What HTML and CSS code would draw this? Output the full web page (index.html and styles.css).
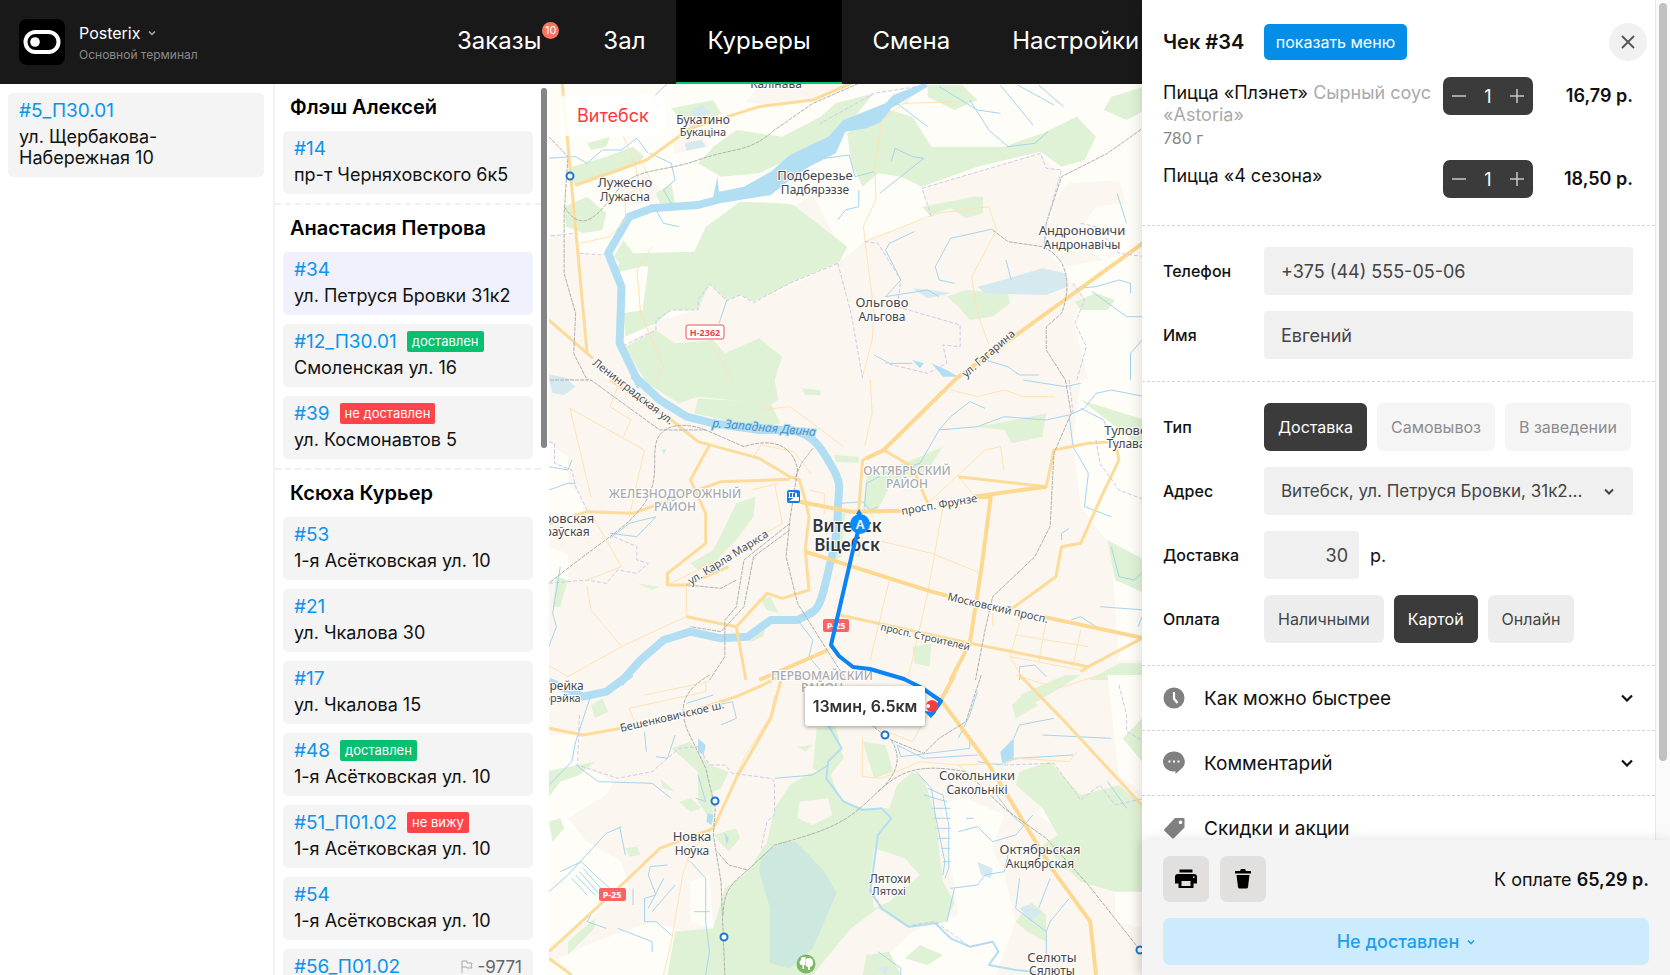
FILE: index.html
```html
<!DOCTYPE html>
<html lang="ru">
<head>
<meta charset="utf-8">
<title>Posterix — Курьеры</title>
<link rel="stylesheet" href="styles.css">
</head>
<body>
<div class="workspace">
  <header class="topbar">
    <button class="brand" type="button">
      <svg class="brand-logo" viewBox="0 0 46 46" aria-hidden="true"><rect width="46" height="46" rx="8" fill="#000"/><rect x="6.500" y="13" width="33" height="20" rx="10" fill="none" stroke="#fff" stroke-width="4"/><circle cx="16" cy="23" r="4.800" fill="#fff"/></svg>
      <span class="brand-text">
        <span class="brand-name">Posterix <svg class="chev-brand" viewBox="0 0 8 6" aria-hidden="true"><path d="M1 1.500l3 3 3-3"/></svg></span>
        <span class="brand-sub">Основной терминал</span>
      </span>
    </button>
    <nav class="tabs">
      <a class="tab" href="#orders">Заказы<span class="count">10</span></a>
      <a class="tab" href="#hall">Зал</a>
      <a class="tab tab-active" href="#couriers">Курьеры</a>
      <a class="tab" href="#shift">Смена</a>
      <a class="tab" href="#settings">Настройки</a>
    </nav>
  </header>
  <div class="board">
    <section class="unassigned">
      <article class="card"><div class="card-head"><a class="order" href="#5">#5_П30.01</a></div><p class="address">ул. Щербакова-Набережная 10</p></article>
    </section>
    <section class="couriers">
      <div class="courier-list">
        <div class="courier">
          <h2 class="courier-name">Флэш Алексей</h2>
          <article class="card"><div class="card-head"><a class="order" href="#14">#14</a></div><p class="address">пр-т Черняховского 6к5</p></article>
        </div>
        <div class="courier">
          <h2 class="courier-name">Анастасия Петрова</h2>
          <article class="card card-selected"><div class="card-head"><a class="order" href="#34">#34</a></div><p class="address">ул. Петруся Бровки 31к2</p></article>
          <article class="card"><div class="card-head"><a class="order" href="#12">#12_П30.01</a><span class="badge badge-ok">доставлен</span></div><p class="address">Смоленская ул. 16</p></article>
          <article class="card"><div class="card-head"><a class="order" href="#39">#39</a><span class="badge badge-bad">не доставлен</span></div><p class="address">ул. Космонавтов 5</p></article>
        </div>
        <div class="courier">
          <h2 class="courier-name">Ксюха Курьер</h2>
          <article class="card"><div class="card-head"><a class="order" href="#53">#53</a></div><p class="address">1-я Асётковская ул. 10</p></article>
          <article class="card"><div class="card-head"><a class="order" href="#21">#21</a></div><p class="address">ул. Чкалова 30</p></article>
          <article class="card"><div class="card-head"><a class="order" href="#17">#17</a></div><p class="address">ул. Чкалова 15</p></article>
          <article class="card"><div class="card-head"><a class="order" href="#48">#48</a><span class="badge badge-ok">доставлен</span></div><p class="address">1-я Асётковская ул. 10</p></article>
          <article class="card"><div class="card-head"><a class="order" href="#51">#51_П01.02</a><span class="badge badge-bad">не вижу</span></div><p class="address">1-я Асётковская ул. 10</p></article>
          <article class="card"><div class="card-head"><a class="order" href="#54">#54</a></div><p class="address">1-я Асётковская ул. 10</p></article>
          <article class="card"><div class="card-head"><a class="order" href="#56">#56_П01.02</a><span class="late"><svg class="flag" viewBox="0 0 12 13" aria-hidden="true"><path d="M1 13V1h5v2h5l-1 3 1 2H6V7H1"/></svg>-9771</span></div></article>
        </div>
      </div>
      <div class="list-scroll"></div>
    </section>
    <section class="map" aria-label="Карта">
      <svg class="map-canvas" viewBox="549 84 593 891" preserveAspectRatio="xMinYMin slice">
        <rect class="land" x="545" y="80" width="640" height="900"/>
        <!-- north -->
        <g transform="translate(545 80) scale(.38265 .33333)">
          <path class="field" d="M0 0H1568V900H1420L1380 720L1410 650L1370 600L1310 500L1320 400L1350 290L1295 220L985 325L1010 410L835 485L765 550L600 640L545 670L430 615L400 690L300 720L210 800L195 640L160 530L90 520L80 470L0 460Z"/>
          <path class="land" d="M525 65L560 15H790L700 60L600 80ZM180 330L260 290L330 350L210 380ZM330 170L400 150L430 200L340 220ZM650 380L700 340L760 480ZM1370 310L1500 300L1520 370L1440 380L1380 480L1460 540L1360 560L1310 500L1330 360Z"/>
          <path class="wood" d="M510 365L620 370L650 375L790 500L770 545L640 610L600 635L545 665L510 645L475 660L430 612L400 690L330 690L290 730L210 770L205 700L255 690L270 560L200 555L180 530L205 480L230 520L390 515L420 440Z"/>
          <path class="wood" d="M330 85L440 60L460 100L420 130L380 140L350 110ZM440 200L500 150L620 170L720 110L760 70L860 40L780 150L650 230L560 280L460 290L400 250ZM850 110L900 90L960 110L1010 200L1200 200L1300 160L1390 110L1440 170L1410 240L1350 260L1295 215L1130 260L985 320L930 290L870 280L830 320L800 250L790 160ZM1000 15H1090L1130 60L1070 90L1000 50ZM1480 50L1568 20V90L1520 120L1460 90Z"/>
          <path class="wood" d="M70 260L160 230L230 200L260 230L230 260L80 320L60 280ZM50 380L110 350L160 400L150 450L100 460L55 440ZM985 380L1120 350H1145V400L1100 415L1060 385L1005 405ZM1050 650L1100 630L1210 640L1215 670L1170 710L1110 720L1080 680ZM1385 665L1440 640L1490 660L1470 690L1400 690ZM210 800L290 750L340 790L440 780L470 820L560 775L620 830L600 900H260ZM110 190L170 170L160 200L120 210ZM180 580L220 500L250 560ZM290 340L330 310L340 370H300Z"/>
          <path class="lake" d="M1130 620L1180 605L1300 565L1360 580L1365 620L1310 645L1150 640ZM380 95L410 75L435 100L390 115ZM365 190L410 180L420 200L370 212ZM960 625L1010 630L1060 640L1000 655ZM0 880L80 900H0Z"/>
          <path class="river" d="M450 360L400 375L280 385L220 410L165 520L200 620L195 790L250 920"/>
          <path class="river-fill" d="M990 10L910 45L890 70L780 120L740 170L640 225L590 275L520 320L455 335L450 290L440 350L430 375L590 345L640 300L690 260L760 220L785 155L840 145L880 125L905 85L1000 20ZM960 840L990 850L980 865ZM1010 850L1050 870L1080 890H1040Z"/>
          <path class="stream" d="M0 235L80 230L110 250L150 210L200 210L240 175L270 220M200 10L320 10L280 55L300 90M275 220L330 250L340 300L310 330L330 370M730 235L795 225L810 290L860 275M820 330V380L785 390L765 420M905 245L915 205L960 230L990 235L875 340M1030 20L1130 90L1190 100M1110 60L1160 150L1210 200L1280 190L1315 155M1190 15L1275 135M1235 15L1330 75M1290 15L1355 80M920 70L1000 140M1170 447L1060 475L1020 560L1030 600L1070 610M965 455L900 490L890 510L930 600L890 650L1000 630L1030 650M1205 540L1218 600M1390 625L1440 620L1500 600L1530 610V640M1430 635L1520 710H1568M1495 340L1520 430M860 825L900 850L960 850M1150 840L1210 860L1240 885H1290M475 660L455 730M290 390L310 430L350 440M1568 770L1530 820V900"/>
          <path class="road-thin" d="M205 170L235 250L250 340M240 220L275 295L210 350V420L170 470L90 490M950 60L880 120L862 260L865 360L832 440L860 700L855 780L830 890M835 485L1025 400L1160 380L1180 450L1115 590L1130 700L1160 795M940 70L1080 65M430 780L490 900M280 500L240 570L250 700L310 860L290 900"/>
          <path class="road" d="M45 10L110 820M80 315L265 240L380 145L560 80L700 60L800 10M10 720L125 835"/>
          <path class="road-big" d="M1568 485L1075 895"/>
          <path class="rail" d="M10 170L60 230L50 400L50 580L80 700L75 820L110 900M50 380C100 470 140 400 190 330S300 280 400 240S530 220 600 150L700 70L820 10M1568 140L1470 220L1350 290L1310 430L1305 500M1170 450L1210 485L1300 500C1380 540 1370 640 1350 700L1310 740V810L1360 900"/>
          <path class="border" d="M0 470L80 460M90 520L155 525M765 550L640 610L545 668L510 645L475 662L430 612L400 660L400 690L330 690L290 720V750L200 800M765 550L800 700L830 895M835 485L870 490L930 600L920 680L1085 735V800L1040 795L1050 850L1000 880L890 850M1010 410L985 325L1295 220L1310 265L1350 270L1310 430L1305 500M1400 430L1440 440L1500 520L1568 530M1380 610L1410 660L1385 730L1415 800L1390 900M1000 15L860 40L720 130"/>
        </g>
        <!-- centre -->
        <g transform="translate(545 380) scale(.38265 .33333)">
          <path class="field" d="M0 180L60 230V310L100 360V400H0ZM1400 0H1568V840H1500L1480 500L1400 380L1380 180Z"/>
          <path class="field" d="M0 500L60 520V600H0Z"/>
          <path class="wood" d="M230 0H600L610 60L580 80L530 65L400 50L350 70L280 20ZM400 55L590 70L615 130L560 145L390 100ZM500 370L550 350L545 410L500 480L430 560L400 570L380 550L440 510L470 440ZM755 225L820 230V250L760 245ZM765 400H785L775 530L750 545ZM560 655L590 650L610 700L580 690ZM960 800L1010 790L1005 860L965 850ZM1120 140L1180 130L1310 100L1300 170L1220 190L1200 150ZM840 290L960 240L1040 200L1000 270L900 320L870 390L830 400ZM1470 480L1568 540V640L1490 600ZM30 590L60 600L40 680H20ZM240 610L300 620L280 630ZM530 790L580 730L570 770ZM670 25L720 30V45L680 45ZM1400 60L1568 120V210L1480 130ZM1420 900L1500 850H1568V900Z"/>
          <path class="lake" d="M10 0L60 0L80 20L50 45L20 40ZM305 210L318 205L310 225Z"/>
          <path class="river" d="M230 -15L300 60L370 110L440 130L560 150L640 150C700 160 720 200 750 260S765 330 765 400S755 500 735 600S710 690 660 720H590L530 770L460 775L380 755L310 780L250 840L195 910"/>
          <path class="stream" d="M10 260L60 270L70 240M10 330L60 310H80M170 475L220 430L290 410L240 470L170 460M40 560L20 700L30 740L10 800M660 720L700 780L690 830L740 900M775 370L830 365L850 390L870 380M835 380L840 310L890 280L980 250L1030 150L1060 110L1110 65L1150 85M1030 150L1130 140L1200 110L1310 120L1370 105L1410 85L1440 40L1480 30L1568 50M1250 0L1360 20L1400 10M1370 110L1380 200L1420 280L1410 380L1480 410M1480 500L1500 590L1540 600L1568 570M1400 85L1460 120L1470 150M1350 480V460L1370 445M1450 680L1568 690L1550 740M1375 720L1400 710L1440 740M1240 900V860L1280 855L1310 890"/>
          <path class="road-thin" d="M65 85L260 210L220 410M65 85L120 350M190 20L170 80L225 120L205 170M545 230L565 195L650 215L695 280M600 310L620 430L520 500L330 610M690 330L730 340V400M780 200L700 130L640 80L560 90M850 0L855 100L835 200M1060 30L1130 50L1200 30L1250 50H1330M1000 370L1150 210L1190 200L1200 270M1080 290L1120 345M865 480L1010 520L1140 580M1040 380L1000 640L950 890M900 600L850 840M610 310L540 330M370 620V710L330 730L200 800L60 890L0 850M110 620L120 690L200 800M120 400L200 560L110 600M1240 730L1215 830L1400 870M1310 720L1290 850M1400 750L1380 860M1230 765L1420 800M1215 830L1250 900M800 510L820 530L830 470M1170 700V740"/>
          <path class="road" d="M170 0L330 120L400 185L560 235L640 290L665 300L680 360L690 410L680 510L690 630L620 655L580 640L500 740L525 900M430 195L380 300L420 400V490L320 580V615H370L480 560M400 330L460 305L640 298M400 330L230 400L110 395L0 435M885 210L830 240L820 390M885 210L960 260L1000 370M1080 290L1310 320L1330 210L1420 190L1490 185L1500 240L1450 360L1400 490L1350 500L1335 590L1215 690M370 710L500 740M770 705L1110 790L1420 860L1568 770M1420 860L1400 875"/>
          <path class="road-big" d="M1080 -10L885 210L840 235M665 365L800 395L930 392M1125 352L1165 350L1140 570L1110 790L1060 900M680 515L1010 635L1060 650M1300 710L1568 775M740 810L620 870L560 900M1120 350L1310 320"/>
          <path class="rail" d="M0 0L120 0L300 150L420 150L520 200C600 170 650 200 660 270L640 420L630 530L660 670L770 870L790 900M420 150C350 120 300 140 290 190S300 300 260 370S150 480 10 610M640 430L520 540L500 680L470 720V830L430 900M640 450L545 530L520 680L460 755L380 740M500 600L460 625L370 615M700 205L670 250L655 290M1360 0L1375 100L1330 220L1320 440L1280 530L1170 650L1150 750L1125 900"/>
          <path class="border" d="M10 185L25 190V250L70 270L80 320L110 390M180 470L240 500V540L270 550L240 580L190 570L160 610L110 600L10 610M1370 0L1380 100M1440 180L1450 250L1500 330L1568 360"/>
        </g>
        <!-- south -->
        <g transform="translate(545 675) scale(.38265 .33333)">
          <path class="field" d="M0 180H90V270L180 320L160 360L60 430L110 500L200 560L220 640L130 720L0 820ZM0 870L130 800L280 740L340 760L320 900H0ZM380 620L430 600L440 760L380 740ZM700 480L730 560L700 580L660 470ZM840 430L880 420L870 480ZM1040 400L1080 360L1200 420L1170 520L1200 600L1230 740L1180 900H840L960 770L1080 720ZM1470 0H1568V360L1500 300ZM1490 650H1568V760L1490 740ZM1290 420L1310 360L1380 440L1350 470Z"/>
          <path class="wood" d="M640 330L680 300L740 280L770 370L830 400L900 400L920 330L960 290L990 310L1020 420L1040 620L1070 680L1050 740L950 760L870 700L800 760L700 900H320L340 770L440 760L470 640L530 590L580 500L600 400ZM1240 290L1320 260L1400 360L1500 330L1568 400V650L1490 650L1400 620L1300 510L1340 480L1300 400L1230 330ZM830 200L890 210L910 290L860 310ZM710 160L760 155L780 250L740 310L700 280ZM120 90L150 70L165 110L130 130ZM330 220L380 200L430 270L480 290L460 340L440 350V450L400 380V290ZM660 215L700 210L680 230ZM0 290L130 260L90 300L40 320L0 380ZM10 440L40 430L50 460L20 500ZM210 520L240 515L250 540L220 545ZM440 480L500 460L510 490L480 530ZM350 380L380 370L410 400L380 410ZM1220 90L1250 60L1290 90L1230 130ZM1240 60L1360 0H1400L1330 50L1270 90ZM1230 740L1270 680L1310 720V800L1260 770ZM840 840L900 830L930 900H830ZM980 810L1040 840L1000 870L940 850ZM130 760L60 840V800L130 730ZM1568 120L1510 190L1568 270ZM300 310L340 350L310 340Z"/>
          <path class="land" d="M665 380L740 370L750 420L700 450L660 430ZM860 520L940 550L980 600L900 680L860 700L850 620ZM1320 760L1420 700L1480 740L1490 900H1400Z"/>
          <path class="lake-deep" d="M565 540L620 500H655L690 540L730 590L762 655L700 820L640 880L588 865V700L560 590Z"/>
          <path class="river-fill" d="M1190 230L1225 190V250L1195 265ZM400 190L420 210L415 240L400 230ZM425 415L440 420L435 450L422 440ZM468 470L480 490L475 510Z"/>
          <path class="lake" d="M1130 560L1170 580L1165 610L1140 600ZM870 880L900 875L890 900ZM1240 700L1260 690L1300 710L1270 740Z"/>
          <path class="river" d="M225 -5L160 50L100 65L10 20"/>
          <path class="river-thin" d="M740 150L775 220L740 260L735 310L780 380L830 405L880 400L905 430L870 480L850 650L880 700L950 755L1020 745L1060 790L1110 815L1170 800L1185 830L1160 870L1230 885L1280 890"/>
          <path class="stream" d="M80 270L140 320L280 325L330 370M120 60L80 200L70 260L10 330M200 455L160 475L60 600L10 650M195 455L210 540M40 590L95 560L130 600L170 640M70 610L110 660M80 600L130 660M90 590L140 655M100 580L150 645M340 180L320 250L290 245M260 170L265 230M320 570L275 575L270 600L290 660L260 670V740L290 740L330 780M310 610L270 700M340 630L280 710M380 560L420 610V740L430 830L420 900M390 710H430M190 760L280 800V830M160 760L110 740L120 720M230 640V690M400 300L420 380L395 370M600 310L700 300L740 270M450 90L490 80L500 130L460 150M370 85L440 60M970 290L1010 340L1020 420L1045 560L1040 600M1000 340L1040 360L1055 450V580L1045 610M990 360L1050 380M1010 400H1060M1015 430H1060M1020 460H1060M1025 490H1060M1035 520H1060M1040 560H1060M1060 640L1130 630L1150 600L1200 590L1210 540M1050 740L1070 640M1080 470L1130 455L1170 500L1230 480L1275 420M1100 430L1120 430M1160 330L1220 420L1270 470M1110 180V220L930 245L920 210L990 250L1130 240M1130 260L1190 270L1230 250L1380 240M1225 190L1240 150L1330 130M1300 180L1480 190M1240 610L1230 700L1310 770L1320 740L1370 670M1320 610L1290 700M1310 770V860M1470 320L1520 400M870 830L930 880V900M1130 50L1110 120L1080 190"/>
          <path class="road-thin" d="M420 50L220 100L240 160M430 20L260 60M420 50V20M600 60L590 120L520 250L440 460L380 530L360 600L330 800L310 900M830 190V305L880 310L980 260L1080 270L1200 265L1240 250L1370 260L1390 230M850 150L960 200L1020 80M1230 0L1340 40L1450 0M1060 50L1010 70M1080 270L1100 290"/>
          <path class="road" d="M10 160L100 180L200 160L350 120L500 65L570 30L620 0M620 0L590 130L500 310L440 460L300 520L200 630L10 830M10 850L70 900"/>
          <path class="road" d="M1240 0L1350 130L1568 400"/>
          <path class="road-big" d="M1070 0L1035 75L1160 270L1330 590L1425 740L1440 900"/>
          <path class="rail" d="M430 0C340 60 360 120 370 160L420 280L445 400L440 480L460 620L470 900M1140 0L1100 140L1030 190L990 235L905 195L840 140M905 195C940 260 910 310 870 350C790 440 760 460 600 510L530 585L480 570L450 530M530 585C470 640 470 660 465 720M870 350C920 300 960 260 1100 290L1200 400L1310 490L1420 630L1555 825"/>
          <path class="border" d="M90 120L85 270L190 310L280 290L350 220L400 215L430 270L470 270L490 295L590 310L600 320V420L580 440L565 520M1500 30L1520 120V170L1568 200M1200 270L1330 265L1400 375L1450 330L1490 390L1568 370M850 640L880 700M960 750L1020 740L1110 815L1170 800"/>
        </g>
        <g class="place">
          <text class="t12" x="776" y="88">Калінава</text>
          <text class="t12" x="703" y="124">Букатино</text><text class="t11" x="703" y="136">Букаціна</text>
          <text class="t13" x="625" y="187">Лужесно</text><text class="t12" x="625" y="201">Лужасна</text>
          <text class="t13" x="815" y="180">Подберезье</text><text class="t12" x="815" y="194">Падбярэззе</text>
          <text class="t13" x="1082" y="235">Андроновичи</text><text class="t12" x="1082" y="249">Андронавічы</text>
          <text class="t13" x="882" y="307">Ольгово</text><text class="t12" x="882" y="321">Альгова</text>
          <text class="t13" x="569" y="523">ровская</text><text class="t12" x="567" y="536">раўская</text>
          <text class="t13" x="1126" y="435">Тулово</text><text class="t12" x="1126" y="448">Тулава</text>
          <text class="t12" x="563" y="690">орейка</text><text class="t11" x="562" y="702">брэйка</text>
          <text class="t13" x="977" y="780">Сокольники</text><text class="t12" x="977" y="794">Сакольнікі</text>
          <text class="t13" x="692" y="841">Новка</text><text class="t12" x="692" y="855">Ноўка</text>
          <text class="t13" x="1040" y="854">Октябрьская</text><text class="t12" x="1040" y="868">Акцябрская</text>
          <text class="t12" x="890" y="883">Лятохи</text><text class="t11" x="889" y="895">Лятохі</text>
          <text class="t13" x="1052" y="962">Селюты</text><text class="t12" x="1052" y="975">Сялюты</text>
          <text class="city" x="847" y="532">Витебск</text><text class="city" x="847" y="551">Віцебск</text>
        </g>
        <g class="district">
          <text x="675" y="498">ЖЕЛЕЗНОДОРОЖНЫЙ</text><text x="675" y="511">РАЙОН</text>
          <text x="907" y="475">ОКТЯБРЬСКИЙ</text><text x="907" y="488">РАЙОН</text>
          <text x="822" y="680">ПЕРВОМАЙСКИЙ</text><text x="822" y="692">РАЙОН</text>
        </g>
        <g class="street">
          <text transform="translate(592 364) rotate(38)">Ленинградская ул.</text>
          <text transform="translate(966 378) rotate(-41)">ул. Гагарина</text>
          <text transform="translate(902 515) rotate(-10)">просп. Фрунзе</text>
          <text transform="translate(691 585) rotate(-32)">ул. Карла Маркса</text>
          <text transform="translate(947 600) rotate(13)">Московский просп.</text>
          <text class="t10" transform="translate(880 630) rotate(13)">просп. Строителей</text>
          <text transform="translate(621 732) rotate(-13)">Бешенковичское ш.</text>
          <text class="water" transform="translate(712 427) rotate(5)">р. Западная Двина</text>
        </g>
        <rect x="686" y="325" width="38" height="14" rx="2" fill="#fff" stroke="#f0505a"/><text class="shield shield-red" x="705" y="336">Н-2362</text>
        <rect x="823" y="619" width="26" height="13" rx="2" fill="#fb6366"/><text class="shield" x="836" y="629">Р-25</text>
        <rect x="599" y="888" width="27" height="13" rx="2" fill="#fb6366"/><text class="shield" x="612" y="898">Р-25</text>
        <g class="station"><circle cx="570" cy="176" r="3.500"/><circle cx="885" cy="735" r="3.500"/><circle cx="715" cy="801" r="3.500"/><circle cx="724" cy="937" r="3.500"/><circle cx="1140" cy="950" r="3.500"/></g>
        <rect x="787" y="490" width="13" height="13" rx="2" fill="#1a78dc"/><path d="M788.500 492.500h6M789.500 492.500v5M792.500 492.500v5M788.500 497.500h6" stroke="#fff" fill="none"/><path d="M795 493h2v4h2v4h-10l6-4z" fill="#fff"/>
        <circle cx="806" cy="964" r="9.500" fill="#7cb865"/><path d="M803 957c-2 0-2.500 2-2 3-2 1-2 4 0 5h1.500v4h1.500v-4h1.500v-8zM809 958a3.500 4.500 0 0 1 1 9v3h-2v-3a3.500 4.500 0 0 1 1-9z" fill="#fff"/>
        <path class="route" d="M859 513L860 524L853 550C847 575 840 605 831 645L839 656L853 667L870 669L904 679L922 688L941 701L932 714"/>
        <path d="M859 509l3 5h-6zM924 711l7 7 5-6z" fill="#0b83f5"/>
        <circle cx="860" cy="524" r="10" fill="#0b8cfa"/><text class="pin" x="860" y="529">A</text>
        <circle cx="932" cy="706" r="6" fill="#fa3c41"/><circle cx="928" cy="706" r="2" fill="#fff"/>
        <g class="eta"><rect x="805" y="686" width="120" height="40" rx="3" fill="#fff"/><text x="865" y="712">13мин, 6.5км</text></g>
      </svg>
      <button class="city-chip" type="button">Витебск</button>
    </section>
  </div>
</div>

<aside class="receipt">
  <div class="receipt-body">
    <div class="receipt-scroll">
      <section class="block items">
        <div class="receipt-head">
          <h1 class="receipt-title">Чек #34</h1>
          <button class="menu-btn" type="button">показать меню</button>
          <button class="close" type="button" aria-label="Закрыть"><svg viewBox="0 0 14 14" aria-hidden="true"><path d="M1 1l12 12M13 1L1 13"/></svg></button>
        </div>
        <div class="item">
          <div class="item-name">Пицца «Плэнет» <span class="extra">Сырный соус «Astoria»</span><div class="weight">780 г</div></div>
          <div class="stepper"><button type="button" aria-label="Меньше"><svg viewBox="0 0 16 16"><path d="M1 8h14"/></svg></button><span>1</span><button type="button" aria-label="Больше"><svg viewBox="0 0 16 16"><path d="M1 8h14M8 1v14"/></svg></button></div>
          <div class="price">16,79 р.</div>
        </div>
        <div class="item">
          <div class="item-name">Пицца «4 сезона»</div>
          <div class="stepper"><button type="button" aria-label="Меньше"><svg viewBox="0 0 16 16"><path d="M1 8h14"/></svg></button><span>1</span><button type="button" aria-label="Больше"><svg viewBox="0 0 16 16"><path d="M1 8h14M8 1v14"/></svg></button></div>
          <div class="price">18,50 р.</div>
        </div>
      </section>
      <section class="block fields">
        <div class="field-row"><label class="label" for="phone">Телефон</label><input class="input" id="phone" type="tel" value="+375 (44) 555-05-06"></div>
        <div class="field-row"><label class="label" for="name">Имя</label><input class="input" id="name" type="text" value="Евгений"></div>
      </section>
      <section class="block fields">
        <div class="field-row"><span class="label">Тип</span><div class="options"><button class="opt opt-on" type="button">Доставка</button><button class="opt opt-dim" type="button">Самовывоз</button><button class="opt opt-dim" type="button">В заведении</button></div></div>
        <div class="field-row"><label class="label" for="addr">Адрес</label><div class="select-wrap"><select class="input input-select" id="addr"><option>Витебск, ул. Петруся Бровки, 31к2...</option></select><svg class="chev-select" viewBox="0 0 10 7" aria-hidden="true"><path d="M1 1.500l4 4 4-4"/></svg></div></div>
        <div class="field-row"><label class="label" for="fee">Доставка</label><input class="input input-fee" id="fee" type="text" value="30"><span class="unit">р.</span></div>
        <div class="field-row"><span class="label">Оплата</span><div class="options"><button class="opt" type="button">Наличными</button><button class="opt opt-on" type="button">Картой</button><button class="opt" type="button">Онлайн</button></div></div>
      </section>
      <button class="fold" type="button"><svg class="fold-icon" viewBox="0 0 22 22" aria-hidden="true"><circle cx="11" cy="11" r="10.500" fill="#808080"/><path d="M11 5v6.500l3.500 4.500" fill="none" stroke="#fff" stroke-width="2.200"/></svg><span>Как можно быстрее</span><svg class="fold-chev" viewBox="0 0 12 8" aria-hidden="true"><path d="M1 1.500l5 5 5-5"/></svg></button>
      <button class="fold" type="button"><svg class="fold-icon" viewBox="0 0 22 24" aria-hidden="true"><path d="M11 .500a10.500 10 0 0 1 6.500 18L12.500 23v-2.700A10.500 10 0 1 1 11 .500z" fill="#808080"/><path d="M5.500 9.500h2v2h-2zM10 9.500h2v2h-2zM14.500 9.500h2v2h-2z" fill="#fff"/></svg><span>Комментарий</span><svg class="fold-chev" viewBox="0 0 12 8" aria-hidden="true"><path d="M1 1.500l5 5 5-5"/></svg></button>
      <button class="fold" type="button"><svg class="fold-icon" viewBox="0 0 22 22" aria-hidden="true"><path fill-rule="evenodd" d="M12 1h8.500q1 0 1 1v8.500L11 21q-1 1-2 0L1.500 14q-1-1 0-2zM17.500 3.500a1.800 1.800 0 1 0 .01 0z" fill="#808080"/></svg><span>Скидки и акции</span></button>
    </div>
    <div class="receipt-track"><div class="receipt-thumb"></div></div>
  </div>
  <footer class="receipt-foot">
    <div class="foot-row">
      <button class="tool" type="button" aria-label="Печать"><svg viewBox="0 0 22 20" aria-hidden="true"><path d="M4.500.500h13v3h-13z"/><path fill-rule="evenodd" d="M3 5h16q3 0 3 3v6.500h-3.500V19h-15v-4.500H0V8q0-3 3-3zM6.500 12v5h9v-5zM18 7.500h1.500V9H18z"/></svg></button>
      <button class="tool" type="button" aria-label="Удалить"><svg viewBox="0 0 22 20" aria-hidden="true"><path d="M3 2h5l1-2h4l1 2h5v2.500H3zM4.500 6h13l-1.500 12q0 1.500-2 1.500H8q-2 0-2-1.500z"/></svg></button>
      <div class="total">К оплате <b>65,29 р.</b></div>
    </div>
    <button class="status-btn" type="button">Не доставлен <svg viewBox="0 0 8 6" aria-hidden="true"><path d="M1 1.500l3 3 3-3"/></svg></button>
  </footer>
</aside>
</body>
</html>
```
FILE: styles.css
```css
* { box-sizing: border-box; }
body {
  margin: 0;
  display: flex;
  height: 100vh;
  overflow: hidden;
  font-family: Inter, "Liberation Sans", sans-serif;
  font-size: 18px;
  color: #111;
  background: #fff;
}
button, input, select { font: inherit; color: inherit; border: 0; padding: 0; margin: 0; background: none; }
a { text-decoration: none; color: inherit; }
h1, h2, p { margin: 0; }
svg { display: block; }

.workspace { flex: 1; min-width: 0; display: flex; flex-direction: column; }
.topbar { display: flex; height: 84px; flex: none; background: #191919; overflow: hidden; color: #fff; }
.brand { flex: 0 0 426px; display: flex; align-items: center; gap: 14px; padding-left: 19px; text-align: left; }
.brand-logo { width: 46px; height: 46px; }
.brand-text { display: flex; flex-direction: column; gap: 2px; padding-top: 4px; }
.brand-name { display: flex; align-items: center; gap: 8px; font-size: 16px; line-height: 20px; }
.brand-sub { font-size: 12px; line-height: 20px; color: #8a8a8a; }
.chev-brand { width: 8px; height: 6px; fill: none; stroke: #aaa; stroke-width: 1.5; }
.tabs { display: flex; flex: none; }
.tab { position: relative; display: flex; align-items: center; padding: 0 31px 4px; font-size: 24px; }
.tab-active { background: #000; border-bottom: 2px solid #0ac46e; padding-bottom: 2px; }
.count { position: absolute; right: 13px; top: 22px; width: 17px; height: 17px; border-radius: 50%; background: #fa7460; font-size: 11px; line-height: 17px; text-align: center; }

.board { flex: 1; min-height: 0; display: flex; }
.unassigned { flex: 0 0 275px; padding: 9px 9px 9px 8px; border-right: 2px solid #f3f3f3; }
.couriers { flex: 0 0 274px; display: flex; overflow: hidden; }
.courier-list { flex: 1; }
.courier { padding-left: 8px; border-bottom: 2px dashed #efefef; }
.courier-name { padding-left: 7px; font-size: 20px; font-weight: 600; line-height: 47px; color: #000; }
.list-scroll { flex: none; width: 6px; height: 360px; margin: 4px 2px 0 0; border-radius: 3px; background: #858585; }
.card { min-height: 63px; margin-bottom: 9px; padding: 4px 11px 9px; border-radius: 5px; background: #f4f4f4; }
.courier .card { margin-right: 8px; }
.card-selected { background: #f1f1fd; }
.card-head { display: flex; align-items: center; gap: 10px; height: 27px; margin-bottom: 2px; }
.order { font-size: 19px; color: #0a95ec; }
.address { font-size: 18px; line-height: 21px; color: #111; }
.badge { padding: 0 5px; border-radius: 2px; color: #fff; font-size: 13px; line-height: 21px; }
.badge-ok { background: #08c070; }
.badge-bad { background: #ff4449; }
.late { margin-left: auto; display: flex; align-items: center; gap: 4px; font-size: 17px; color: #666; }
.flag { width: 12px; height: 13px; fill: none; stroke: #aaa; }

.map { position: relative; flex: 1; min-width: 0; overflow: hidden; background: #fbf7f0; }
.map-canvas { width: 100%; height: 100%; font-family: "Noto Sans", "Open Sans", sans-serif; }
.city-chip { position: absolute; left: 12px; top: 11px; padding: 0 16px; border-radius: 5px; background: rgba(255, 255, 255, .85); color: #ff383f; font-size: 18px; line-height: 41px; }
.land { fill: #fbf7f0; }
.field { fill: #fefdf7; }
.wood { fill: #e0f2d5; }
.lake { fill: #d5e9ef; }
.lake-deep { fill: #cce8df; }
.river-fill { fill: #b2def4; }
.river, .river-thin, .stream, .road, .road-big, .road-thin, .rail, .border { fill: none; vector-effect: non-scaling-stroke; stroke-linejoin: round; }
.river { stroke: #b2def4; stroke-width: 8px; }
.river-thin { stroke: #b2def4; stroke-width: 2px; }
.stream { stroke: #a4d5ef; stroke-width: 1px; }
.road { stroke: #fddc9b; stroke-width: 3px; }
.road-big { stroke: #fdd890; stroke-width: 4px; }
.road-thin { stroke: #fee3b4; stroke-width: 1px; }
.rail { stroke: #b0b0b0; stroke-width: 1px; stroke-dasharray: 4 1; }
.border { stroke: #cfc8ec; stroke-width: 1px; stroke-dasharray: 4 2; }
.place text { fill: #45464c; text-anchor: middle; stroke: #fff; stroke-width: 2px; paint-order: stroke; }
.place .city { font-size: 17px; font-weight: 600; fill: #33353a; }
.t13 { font-size: 13px; }
.t12 { font-size: 12px; }
.t11 { font-size: 11px; }
.district text { fill: #a9a9ad; font-size: 12px; font-weight: 500; text-anchor: middle; stroke: #fff; stroke-width: 2px; paint-order: stroke; }
.street text { fill: #4c4c50; font-size: 11px; stroke: #fff; stroke-width: 2px; paint-order: stroke; }
.street .t10 { font-size: 10px; }
.street .water { fill: #4a8fc4; font-size: 12px; font-style: italic; stroke: #b2def4; }
.shield { fill: #fff; font-size: 9px; font-weight: 700; text-anchor: middle; }
.shield-red { fill: #ee3f49; }
.station circle { fill: #fff; stroke: #1c77d3; stroke-width: 2px; }
.route { fill: none; stroke: #0b83f5; stroke-width: 4px; stroke-linejoin: round; }
.pin { fill: #fff; font-size: 13px; font-weight: 600; text-anchor: middle; }
.eta { filter: drop-shadow(0 1px 2px rgba(0, 0, 0, .4)); }
.eta text { font-family: Inter, sans-serif; font-size: 16px; font-weight: 600; fill: #333; text-anchor: middle; }

.receipt { position: relative; flex: 0 0 528px; min-width: 0; display: flex; flex-direction: column; background: #fff; box-shadow: 0 0 14px rgba(0, 0, 0, .16); }
.receipt-body { flex: 1; min-height: 0; display: flex; overflow: hidden; }
.receipt-scroll { flex: 1; min-width: 0; }
.receipt-track { flex: 0 0 15px; padding: 3px; border-left: 1px solid #e8e8e8; background: #fafafa; }
.receipt-thumb { height: 758px; border-radius: 4px; background: #c1c1c1; }
.block { padding: 21px 22px 22px 21px; border-bottom: 1px dashed #d4d4d4; }
.items { padding: 23px 22px 27px 21px; }
.receipt-head { display: flex; align-items: center; height: 38px; margin-bottom: 16px; }
.receipt-title { flex: 0 0 101px; font-size: 20px; font-weight: 600; }
.menu-btn { width: 143px; height: 36px; border-radius: 5px; background: #058ee8; color: #fff; font-size: 16px; }
.close { width: 38px; height: 38px; margin: 0 -14px 0 auto; border-radius: 50%; background: #f1f1f1; display: grid; place-items: center; }
.close svg { width: 14px; height: 14px; fill: none; stroke: #555; stroke-width: 1.8; }
.item { display: flex; align-items: flex-start; }
.item + .item { margin-top: 10px; }
.item-name { flex: 1; padding: 5px 10px 0 0; line-height: 22px; }
.extra { color: #aaa; }
.weight { font-size: 16px; line-height: 24px; color: #888; }
.stepper { flex: 0 0 90px; height: 38px; padding: 0 8px; display: flex; align-items: center; justify-content: space-between; border-radius: 7px; background: #3b3b3b; color: #fff; }
.stepper svg { width: 16px; height: 16px; fill: none; stroke: #c8c8c8; stroke-width: 1.5; }
.price { flex: 0 0 100px; text-align: right; font-weight: 600; line-height: 38px; }
.fields { display: flex; flex-direction: column; gap: 16px; }
.field-row { display: flex; align-items: center; height: 48px; }
.label { flex: 0 0 101px; font-size: 16px; font-weight: 500; }
.input { flex: 1; min-width: 0; height: 48px; padding: 0 17px; border-radius: 4px; background: #f0f0f0; color: #444; appearance: none; }
.input-select { font-size: 17px; }
.input-fee { flex: 0 0 95px; padding: 0 11px; text-align: right; }
.unit { margin-left: 11px; }
.select-wrap { position: relative; flex: 1; min-width: 0; display: flex; }
.chev-select { position: absolute; right: 19px; top: 21px; width: 10px; height: 7px; fill: none; stroke: #444; stroke-width: 2; }
.options { display: flex; gap: 10px; }
.opt { height: 48px; padding: 0 14px; border-radius: 6px; background: #ededed; color: #444; font-size: 16px; white-space: nowrap; }
.opt-dim { background: #f5f5f5; color: #8c8c8c; }
.opt-on { background: #3b3b3b; color: #fff; }
.fold { width: 100%; height: 65px; padding: 0 22px 0 21px; display: flex; align-items: center; border-bottom: 1px dashed #d4d4d4; font-size: 19px; text-align: left; }
.fold-icon { width: 22px; height: 24px; margin-right: 19px; }
.fold-chev { width: 12px; height: 8px; margin-left: auto; fill: none; stroke: #111; stroke-width: 2.2; }
.receipt-foot { position: relative; flex: none; padding: 16px 21px 10px; background: #f4f4f4; box-shadow: 0 0 12px rgba(0, 0, 0, .12); }
.foot-row { display: flex; align-items: center; gap: 11px; margin-bottom: 16px; }
.tool { width: 46px; height: 46px; border-radius: 7px; background: #e1e0df; display: grid; place-items: center; }
.tool svg { width: 22px; height: 20px; }
.total { margin-left: auto; }
.total b { font-weight: 600; }
.status-btn { width: 100%; height: 47px; border-radius: 7px; background: #cdebff; color: #1c9ff0; font-weight: 500; display: flex; align-items: center; justify-content: center; gap: 8px; }
.status-btn svg { width: 8px; height: 6px; fill: none; stroke: #1c9ff0; stroke-width: 1.6; }
```
